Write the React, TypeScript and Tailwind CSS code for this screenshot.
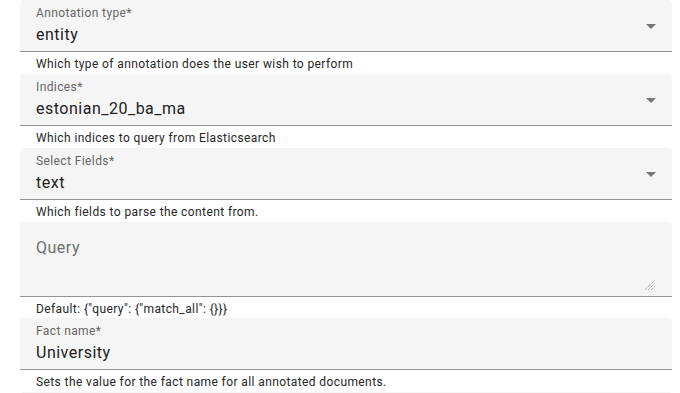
import React from "react";

const font = { fontFamily: "Roboto, 'Noto Sans', Arial, sans-serif" };

function Caret() {
  return (
    <svg width="10" height="5" viewBox="0 0 10 5" className="absolute right-[16px] top-[24px]">
      <path d="M0 0 L10 0 L5 5 Z" fill="#757575" />
    </svg>
  );
}

function Field({
  label,
  value,
  hint,
  select,
}: {
  label: string;
  value: string;
  hint: string;
  select?: boolean;
}) {
  return (
    <div className="flex flex-col">
      <div className="relative h-[52px] rounded-t-[4px] bg-[#f5f5f5] border-b border-[#949494] pl-4 pr-10 pt-[6px]">
        <div className="text-[12px] leading-[14px] text-[#666666] tracking-[0.4px]">{label}</div>
        <div className="mt-[5px] text-[16px] leading-[20px] text-[#212121] tracking-[0.5px]">{value}</div>
        {select && <Caret />}
      </div>
      <div className="h-[22px] pl-4 pt-[5px] text-[12px] leading-[14px] text-[#262626] tracking-[0.4px]">{hint}</div>
    </div>
  );
}

export default function App() {
  return (
    <div className="bg-white h-[393px] overflow-hidden" style={font}>
      <div className="ml-5 w-[652px] flex flex-col">
        <Field
          label="Annotation type*"
          value="entity"
          hint="Which type of annotation does the user wish to perform"
          select
        />
        <Field
          label="Indices*"
          value="estonian_20_ba_ma"
          hint="Which indices to query from Elasticsearch"
          select
        />
        <Field
          label="Select Fields*"
          value="text"
          hint="Which fields to parse the content from."
          select
        />
        <div className="flex flex-col">
          <div className="relative h-[75px] rounded-t-[4px] bg-[#f5f5f5] border-b border-[#949494] pl-4 pt-[16px]">
            <div className="text-[16px] leading-[20px] text-[#6e6e6e] tracking-[0.5px]">Query</div>
            <svg width="11" height="10" viewBox="0 0 11 10" className="absolute right-[17px] bottom-[6px]">
              <g stroke="#8a8a8a" strokeWidth="1" strokeDasharray="1 1">
                <line x1="1" y1="10" x2="11" y2="0" />
                <line x1="4" y1="10" x2="11" y2="3" />
                <line x1="7" y1="10" x2="11" y2="6" />
              </g>
            </svg>
          </div>
          <div className="h-[21px] pl-4 pt-[5px] text-[12px] leading-[14px] text-[#262626] tracking-[0.4px]">
            {'Default: {"query": {"match_all": {}}}'}
          </div>
        </div>
        <Field
          label="Fact name*"
          value="University"
          hint="Sets the value for the fact name for all annotated documents."
        />
        <div className="h-[52px] rounded-t-[4px] bg-[#f5f5f5]" />
      </div>
    </div>
  );
}
